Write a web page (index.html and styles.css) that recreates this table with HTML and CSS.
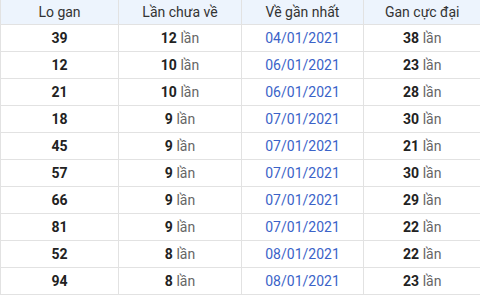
FILE: index.html
```html
<!DOCTYPE html>
<html lang="vi">

<head>
    <meta charset="UTF-8">
    <meta name="viewport" content="width=device-width, initial-scale=1.0">
    <title>Lo gan</title>

    <link rel="stylesheet" href="styles.css">
</head>

<body>
    <table class="ganTable">
        <colgroup>
            <col class="c1">
            <col class="c2">
            <col class="c3">
            <col class="c4">
        </colgroup>
        <thead>
            <tr>
                <th>Lo gan</th>
                <th>Lần chưa về</th>
                <th>Về gần nhất</th>
                <th>Gan cực đại</th>
            </tr>
        </thead>
        <tbody>
            <tr><td><b>39</b></td><td><b>12</b> <span class="unit">lần</span></td><td class="date">04/01/2021</td><td><b>38</b> <span class="unit">lần</span></td></tr>
            <tr><td><b>12</b></td><td><b>10</b> <span class="unit">lần</span></td><td class="date">06/01/2021</td><td><b>23</b> <span class="unit">lần</span></td></tr>
            <tr><td><b>21</b></td><td><b>10</b> <span class="unit">lần</span></td><td class="date">06/01/2021</td><td><b>28</b> <span class="unit">lần</span></td></tr>
            <tr><td><b>18</b></td><td><b>9</b> <span class="unit">lần</span></td><td class="date">07/01/2021</td><td><b>30</b> <span class="unit">lần</span></td></tr>
            <tr><td><b>45</b></td><td><b>9</b> <span class="unit">lần</span></td><td class="date">07/01/2021</td><td><b>21</b> <span class="unit">lần</span></td></tr>
            <tr><td><b>57</b></td><td><b>9</b> <span class="unit">lần</span></td><td class="date">07/01/2021</td><td><b>30</b> <span class="unit">lần</span></td></tr>
            <tr><td><b>66</b></td><td><b>9</b> <span class="unit">lần</span></td><td class="date">07/01/2021</td><td><b>29</b> <span class="unit">lần</span></td></tr>
            <tr><td><b>81</b></td><td><b>9</b> <span class="unit">lần</span></td><td class="date">07/01/2021</td><td><b>22</b> <span class="unit">lần</span></td></tr>
            <tr><td><b>52</b></td><td><b>8</b> <span class="unit">lần</span></td><td class="date">08/01/2021</td><td><b>22</b> <span class="unit">lần</span></td></tr>
            <tr><td><b>94</b></td><td><b>8</b> <span class="unit">lần</span></td><td class="date">08/01/2021</td><td><b>23</b> <span class="unit">lần</span></td></tr>
        </tbody>
    </table>
</body>

</html>
```

FILE: styles.css
```css
*{
    margin: 0;
    padding: 0;
    box-sizing: border-box;
}

body{
    font-family: Roboto, "Liberation Sans", sans-serif;
    background: #ffffff;
    color: #222;
}

.ganTable{
    width: 480px;
    border-collapse: collapse;
    table-layout: fixed;
    font-size: 14px;
}

.c1{ width: 118px; }
.c2{ width: 123px; }
.c3{ width: 122px; }
.c4{ width: 117px; }

.ganTable th{
    height: 24px;
    background-color: #edf4fd;
    font-weight: normal;
    color: #333;
    text-align: center;
    border: 1px solid #e2e2e2;
    border-top: none;
}

.ganTable td{
    height: 27px;
    text-align: center;
    border: 1px solid #e2e2e2;
}

.ganTable th:last-child,
.ganTable td:last-child{
    border-right: none;
}

.ganTable b{
    font-weight: bold;
    color: #222;
}

.unit{
    color: #666;
}

.date{
    color: #3b63c8;
}
```
